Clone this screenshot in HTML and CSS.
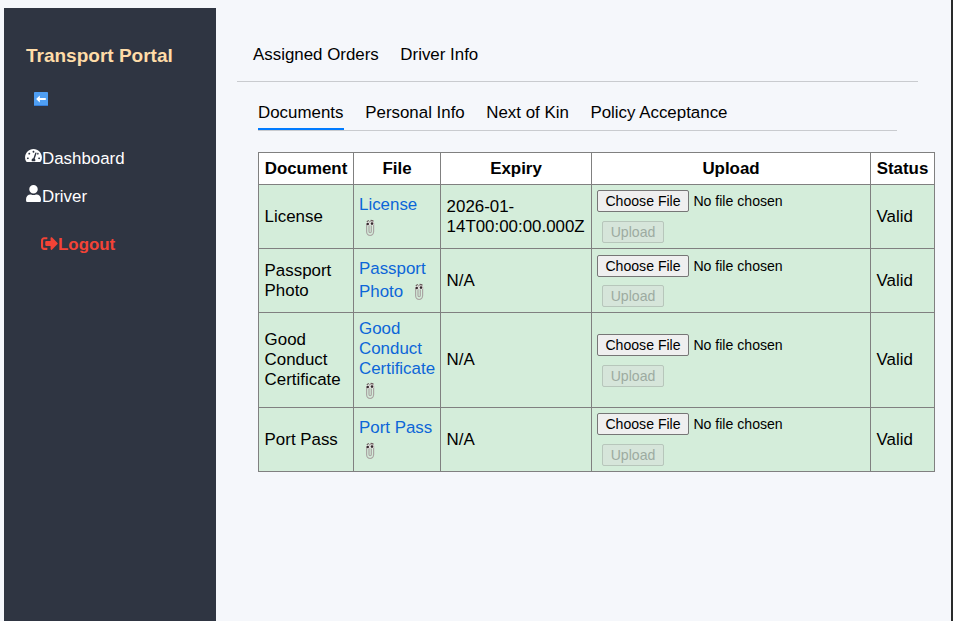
FILE: index.html
```html
<!DOCTYPE html>
<html lang="en">
<head>
<meta charset="utf-8">
<title>Transport Portal</title>
<link rel="stylesheet" href="styles.css">
</head>
<body>
<svg class="defs" aria-hidden="true">
  <symbol id="clip" viewBox="0 0 10 18">
    <path d="M1.6 5v7.6a3.5 3.9 0 0 0 7 0V4.4a2.3 2.3 0 0 0-4.6 0v8.2a1.1 1.1 0 0 0 2.3 0V6.2" fill="none" stroke="#aaa5a3" stroke-width="1.2"/>
    <circle cx="3.1" cy="4.8" r="1.9" fill="#eee9e8"/><circle cx="7.1" cy="4.5" r="1.9" fill="#eee9e8"/>
    <path d="M1.8 2.8l2-1.4M5.6 1.2l2.8.7" fill="none" stroke="#6d5c5e" stroke-width="1.1"/>
    <circle cx="2.7" cy="5" r="1.3" fill="#352b2e"/><circle cx="7" cy="4.6" r="1.3" fill="#352b2e"/>
  </symbol>
</svg>
<div class="app">
  <aside class="sidebar">
    <h1 class="brand">Transport Portal</h1>
    <button class="collapse" aria-label="Collapse">
      <svg viewBox="0 0 14 14"><rect width="14" height="14" rx=".7" fill="#4f9ff4"/><rect y="13" width="14" height="1" fill="#357edb"/><path d="M2.1 7l3.7-3.5v2.4h6v2.2h-6v2.4z" fill="#fff"/></svg>
    </button>
    <nav class="menu">
      <a class="item"><svg class="ico gauge" viewBox="0 0 576 512"><path fill="currentColor" d="M288 32C129 32 0 161 0 320c0 53 14 102 39 145 6 10 16 15 27 15h444c11 0 21-5 27-15 25-43 39-92 39-145C576 161 447 32 288 32zm0 64c18 0 31 14 32 31l-8 26c-6 4-14 7-24 7-18 0-32-14-32-32s14-32 32-32zM96 384c-18 0-32-14-32-32s14-32 32-32 32 14 32 32-14 32-32 32zm48-160c-18 0-32-14-32-32s14-32 32-32 32 14 32 32-14 32-32 32zm247-40l-61 184c13 12 22 28 22 48 0 12-3 22-9 32H233c-6-10-9-20-9-32 0-34 27-62 61-64l61-183c4-13 18-20 30-15 13 4 20 17 15 30zm15 33l15-47c4-4 7-10 11-10 18 0 32 14 32 32s-14 32-32 32c-11 0-20-3-26-7zm74 167c-18 0-32-14-32-32s14-32 32-32 32 14 32 32-14 32-32 32z"/></svg>Dashboard</a>
      <a class="item"><svg class="ico user" viewBox="0 0 448 512"><path fill="currentColor" d="M224 256c71 0 128-57 128-128S295 0 224 0 96 57 96 128s57 128 128 128zm90 32h-17c-22 10-47 16-73 16s-51-6-73-16h-17C60 288 0 348 0 422v42c0 27 21 48 48 48h352c27 0 48-21 48-48v-42c0-74-60-134-134-134z"/></svg>Driver</a>
      <a class="item logout"><svg class="ico out" viewBox="0 0 512 512"><path fill="currentColor" d="M497 273L329 441c-15 15-41 5-41-17v-96H152c-13 0-24-11-24-24v-96c0-13 11-24 24-24h136V88c0-21 26-32 41-17l168 168c9 9 9 25 0 34zM192 436v-40c0-7-5-12-12-12H96c-18 0-32-14-32-32V160c0-18 14-32 32-32h84c7 0 12-5 12-12V76c0-7-5-12-12-12H96c-53 0-96 43-96 96v192c0 53 43 96 96 96h84c7 0 12-5 12-12z"/></svg>Logout</a>
    </nav>
  </aside>
  <main class="content">
    <nav class="tabs primary"><a>Assigned Orders</a><a>Driver Info</a></nav>
    <section class="panel">
      <nav class="tabs secondary"><a class="active">Documents</a><a>Personal Info</a><a>Next of Kin</a><a>Policy Acceptance</a></nav>
      <table class="docs">
        <colgroup><col class="c-doc"><col class="c-file"><col class="c-exp"><col class="c-up"><col class="c-stat"></colgroup>
        <thead><tr><th>Document</th><th>File</th><th>Expiry</th><th>Upload</th><th>Status</th></tr></thead>
        <tbody>
          <tr><td>License</td><td><a class="link">License</a> <svg class="clip"><use href="#clip"/></svg></td><td>2026-01-14T00:00:00.000Z</td><td><div class="upload"><input type="file"><button disabled>Upload</button></div></td><td>Valid</td></tr>
          <tr class="snug"><td>Passport Photo</td><td><a class="link">Passport Photo</a> <svg class="clip"><use href="#clip"/></svg></td><td>N/A</td><td><div class="upload"><input type="file"><button disabled>Upload</button></div></td><td>Valid</td></tr>
          <tr class="tall"><td>Good Conduct Certificate</td><td><a class="link">Good Conduct Certificate</a> <svg class="clip"><use href="#clip"/></svg></td><td>N/A</td><td><div class="upload"><input type="file"><button disabled>Upload</button></div></td><td>Valid</td></tr>
          <tr><td>Port Pass</td><td><a class="link">Port Pass</a> <svg class="clip"><use href="#clip"/></svg></td><td>N/A</td><td><div class="upload"><input type="file"><button disabled>Upload</button></div></td><td>Valid</td></tr>
        </tbody>
      </table>
    </section>
  </main>
</div>
</body>
</html>
```
FILE: styles.css
```css
* { box-sizing: border-box; }
body {
  margin: 0;
  background: #f5f7fb;
  color: #000;
  font: 16.9px/20px "Liberation Sans", Arial, sans-serif;
}
.defs { display: none; }
.app {
  display: flex;
  height: 621px;
  padding: 8px 0 0 4px;
  border-right: 2px solid #292a2b;
  overflow: hidden;
}
.sidebar {
  flex: 0 0 212px;
  padding: 37px 21px 0;
  background: #2f3542;
  color: #fff;
}
.brand {
  margin: 0 0 0 1px;
  font-size: 19px;
  line-height: 22px;
  color: #ffdca8;
}
.collapse {
  display: block;
  margin: 25px 0 0 9px;
  padding: 0;
  border: 0;
  background: none;
  width: 14px;
  height: 14px;
}
.collapse svg { display: block; width: 14px; height: 14px; }
.menu { display: flex; flex-direction: column; margin-top: 43px; }
.item { display: flex; height: 20px; margin-bottom: 18px; }
.ico { flex: none; height: 17px; }
.gauge { width: 17px; height: 15px; margin: -1px 0 0; }
.user { width: 15px; margin: -2px 1px 0; }
.out { width: 17px; margin-top: 0; }
.logout { margin: 10px 0 0 16px; color: #f44336; font-weight: bold; }
.content { flex: 1; padding: 28px 33px 0 21px; min-width: 0; }
.tabs { display: flex; border-bottom: 1px solid #c9cbcf; }
.primary { height: 46px; padding: 9px 16px 0; gap: 21.5px; }
.panel { padding: 0 21px; }
.secondary { height: 49px; padding-top: 21px; gap: 21.5px; }
.secondary .active { height: 27px; border-bottom: 2px solid #007bff; padding-right: .3px; }
.docs {
  width: 677px;
  margin-top: 21px;
  table-layout: fixed;
  border-collapse: collapse;
}
.c-doc { width: 95px; }
.c-file { width: 87px; }
.c-exp { width: 151px; }
.c-up { width: 279px; }
.c-stat { width: 64px; }
.docs th, .docs td { border: 1px solid #808080; padding: 0 0 0 5.6px; }
.docs th { height: 32px; padding: 0; background: #fff; text-align: center; }
.docs td { height: 64px; background: #d4edda; text-align: left; vertical-align: middle; }
.docs .tall td { height: 95px; }
.docs td:nth-child(2), .docs td:nth-child(4) { padding-left: 5px; }
.docs td:nth-child(2) { padding-bottom: 1px; }
.docs .tall td:nth-child(2) { padding-bottom: 0; }
.docs .tall .clip { margin-top: 3px; }
.link { color: #0c66d8; }
.clip { width: 10px; height: 18px; margin: 4px 5px 0 6px; vertical-align: -4px; }
.upload { display: flex; flex-direction: column; align-items: flex-start; gap: 9px; }
.snug .upload { gap: 8px; padding-top: 1px; }
.upload input, .upload button { font: 14.1px/16px "Liberation Sans", Arial, sans-serif; }
.upload input { width: 268px; height: 22px; }
.upload input::file-selector-button {
  width: 92px;
  height: 22px;
  margin: 0 4.4px 0 0;
  padding: 0;
  border: 1px solid #767676;
  border-radius: 2px;
  background: #efefef;
  color: #000;
  font: inherit;
}
.upload button {
  width: 62px;
  height: 22px;
  margin-left: 5px;
  padding: 0;
  border: 1px solid #b7c6bb;
  border-radius: 2px;
  background: #d6e5da;
  color: #9daba1;
}
```
